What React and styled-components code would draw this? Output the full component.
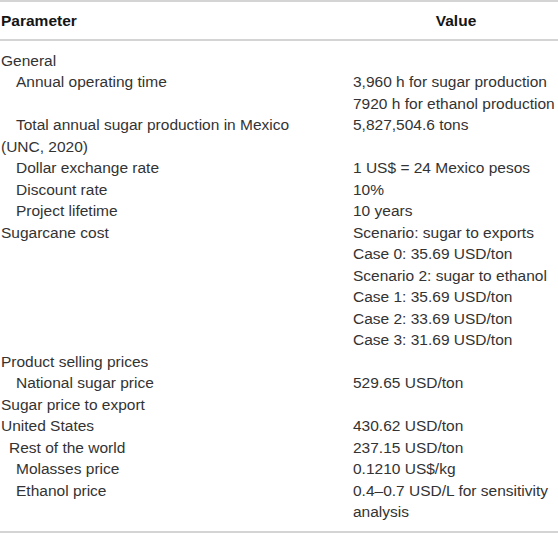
import React from "react";
import styled, { createGlobalStyle } from "styled-components";

const Global = createGlobalStyle`
  html, body { margin: 0; padding: 0; background: #fff; overflow: hidden; }
  body { font-family: "Liberation Sans", Arial, sans-serif; }
`;

const Table = styled.table`
  width: 558px;
  border-collapse: collapse;
  table-layout: fixed;
  font-size: 15.5px;
  line-height: 21.5px;
  color: #333333;
`;

const Head = styled.thead`
  border-top: 2px solid #d4d4d4;
  border-bottom: 2px solid #d4d4d4;
`;

const HeadCell = styled.th`
  font-weight: bold;
  color: #151515;
  padding: 8px 0 7px ${(p) => (p.$right ? "0" : "1px")};
  text-align: ${(p) => (p.$right ? "center" : "left")};
  width: ${(p) => (p.$right ? "206px" : "352px")};
`;

const Body = styled.tbody`
  border-bottom: 2px solid #d4d4d4;
`;

const Row = styled.tr``;

const Cell = styled.td`
  padding: ${(p) => (p.$first ? "9px" : "0")} 0 ${(p) => (p.$last ? "8px" : "0")}
    ${(p) => p.$indent || 1}px;
  vertical-align: top;
  white-space: nowrap;
`;

const ValueCell = styled.td`
  padding: ${(p) => (p.$first ? "9px" : "0")} 0 ${(p) => (p.$last ? "8px" : "0")} 0;
  vertical-align: top;
  white-space: nowrap;
`;

const rows = [
  { p: "General", i: 1, v: [] },
  { p: "Annual operating time", i: 16, v: ["3,960 h for sugar production", "7920 h for ethanol production"] },
  { p: ["Total annual sugar production in Mexico", "(UNC, 2020)"], i: 16, v: ["5,827,504.6 tons"] },
  { p: "Dollar exchange rate", i: 16, v: ["1 US$ = 24 Mexico pesos"] },
  { p: "Discount rate", i: 16, v: ["10%"] },
  { p: "Project lifetime", i: 16, v: ["10 years"] },
  {
    p: "Sugarcane cost",
    i: 1,
    v: [
      "Scenario: sugar to exports",
      "Case 0: 35.69 USD/ton",
      "Scenario 2: sugar to ethanol",
      "Case 1: 35.69 USD/ton",
      "Case 2: 33.69 USD/ton",
      "Case 3: 31.69 USD/ton",
    ],
  },
  { p: "Product selling prices", i: 1, v: [] },
  { p: "National sugar price", i: 16, v: ["529.65 USD/ton"] },
  { p: "Sugar price to export", i: 1, v: [] },
  { p: "United States", i: 1, v: ["430.62 USD/ton"] },
  { p: "Rest of the world", i: 9, v: ["237.15 USD/ton"] },
  { p: "Molasses price", i: 16, v: ["0.1210 US$/kg"] },
  { p: "Ethanol price", i: 16, v: ["0.4–0.7 USD/L for sensitivity", "analysis"] },
];

const Line = styled.div``;
const Outdent = styled.div`
  margin-left: -15px;
`;

export default function App() {
  return (
    <>
      <Global />
      <Table>
        <Head>
          <tr>
            <HeadCell>Parameter</HeadCell>
            <HeadCell $right>Value</HeadCell>
          </tr>
        </Head>
        <Body>
          {rows.map((r, idx) => {
            const first = idx === 0;
            const last = idx === rows.length - 1;
            return (
              <Row key={idx}>
                <Cell $indent={r.i} $first={first} $last={last}>
                  {Array.isArray(r.p) ? (
                    <>
                      <Line>{r.p[0]}</Line>
                      <Outdent>{r.p[1]}</Outdent>
                    </>
                  ) : (
                    r.p
                  )}
                </Cell>
                <ValueCell $first={first} $last={last}>
                  {r.v.map((t, j) => (
                    <Line key={j}>{t}</Line>
                  ))}
                </ValueCell>
              </Row>
            );
          })}
        </Body>
      </Table>
    </>
  );
}
